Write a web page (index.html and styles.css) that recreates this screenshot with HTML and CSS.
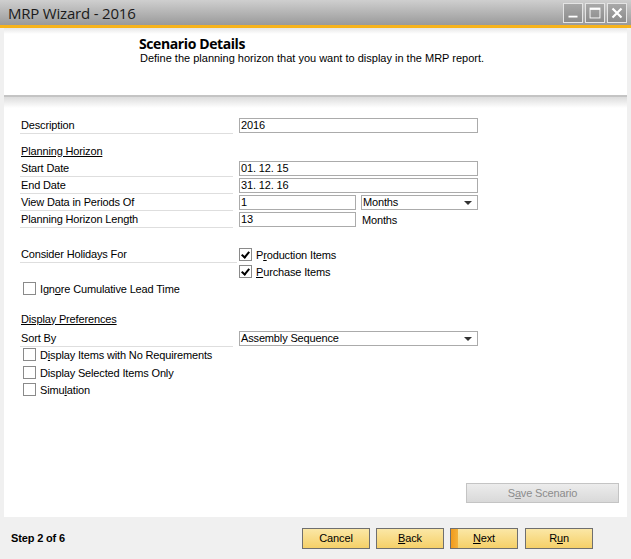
FILE: index.html
```html
<!DOCTYPE html>
<html>
<head>
<meta charset="utf-8">
<link rel="stylesheet" href="styles.css">
</head>
<body>
<div class="window">
  <div class="titlebar">
    <div class="title">MRP Wizard - 2016</div>
    <div class="controls">
      <div class="ctl"><svg width="20" height="20" viewBox="0 0 20 20"><rect x="5" y="13" width="10" height="2" fill="#fff"/></svg></div>
      <div class="ctl"><svg width="20" height="20" viewBox="0 0 20 20"><rect x="4.5" y="4.5" width="11" height="11" fill="none" stroke="#fff" stroke-width="1"/><rect x="4.5" y="4.5" width="11" height="2" fill="#fff"/></svg></div>
      <div class="ctl"><svg width="20" height="20" viewBox="0 0 20 20"><path d="M5 5 L15 15 M15 5 L5 15" stroke="#fff" stroke-width="2.4"/></svg></div>
    </div>
  </div>
  <div class="accent"></div>
  <div class="main">
    <div class="header">
      <div class="h-title">Scenario Details</div>
      <div class="h-sub">Define the planning horizon that you want to display in the MRP report.</div>
    </div>
    <div class="sep"></div>
    <div class="form">
      <div class="row first">
        <div class="label">Description</div>
        <div class="field wide">2016</div>
      </div>
      <div class="row gap1">
        <div class="section">Planning Horizon</div>
      </div>
      <div class="row step1">
        <div class="label">Start Date</div>
        <div class="field wide">01. 12. 15</div>
      </div>
      <div class="row">
        <div class="label">End Date</div>
        <div class="field wide">31. 12. 16</div>
      </div>
      <div class="row">
        <div class="label">View Data in Periods Of</div>
        <div class="field half">1</div>
        <div class="select half2">Months<span class="arrow"></span></div>
      </div>
      <div class="row">
        <div class="label">Planning Horizon Length</div>
        <div class="field half">13</div>
        <div class="plain">Months</div>
      </div>
      <div class="row gap2">
        <div class="label long">Consider Holidays For</div>
        <div class="check"><span class="box on"></span>P<u>r</u>oduction Items</div>
      </div>
      <div class="row">
        <div class="label nolines"></div>
        <div class="check"><span class="box on"></span><u>P</u>urchase Items</div>
      </div>
      <div class="row">
        <div class="check left"><span class="box"></span>Ign<u>o</u>re Cumulative Lead Time</div>
      </div>
      <div class="row gap3">
        <div class="section">Display Preferences</div>
      </div>
      <div class="row sortrow">
        <div class="label">Sort By</div>
        <div class="select wide">Assembly Sequence<span class="arrow"></span></div>
      </div>
      <div class="row tight">
        <div class="check left"><span class="box"></span>D<u>i</u>splay Items with No Requirements</div>
      </div>
      <div class="row step1">
        <div class="check left"><span class="box"></span>Display Selected Items Only</div>
      </div>
      <div class="row">
        <div class="check left"><span class="box"></span>Simu<u>l</u>ation</div>
      </div>
      <div class="spacer"></div>
      <div class="save-row">
        <div class="save">S<u>a</u>ve Scenario</div>
      </div>
    </div>
  </div>
  <div class="footer">
    <div class="step">Step 2 of 6</div>
    <div class="buttons">
      <div class="btn">Cancel</div>
      <div class="btn"><u>B</u>ack</div>
      <div class="btn next"><u>N</u>ext</div>
      <div class="btn run">R<u>u</u>n</div>
    </div>
  </div>
</div>
</body>
</html>
```
FILE: styles.css
```css
* { box-sizing: border-box; }
html, body { margin: 0; padding: 0; }
body {
  width: 631px;
  height: 559px;
  background: #f0f0f0;
  font-family: "Liberation Sans", Arial, sans-serif;
  font-size: 11px;
  letter-spacing: -0.15px;
  color: #000;
  overflow: hidden;
}
.window { display: flex; flex-direction: column; height: 559px; }
.titlebar {
  height: 25px;
  background: linear-gradient(#cfcfcf, #9a9a9a);
  display: flex;
  align-items: center;
  justify-content: space-between;
  padding: 0 4px 0 8px;
}
.title {
  font-family: "Open Sans", "Liberation Sans", sans-serif;
  font-size: 15px;
  color: #1a1a1a;
  letter-spacing: -0.2px;
}
.controls { display: flex; gap: 2px; margin-top: 1px; }
.ctl {
  width: 20px; height: 20px;
  border: 1px solid #e4e4e4;
  background: linear-gradient(#a8a8a8, #8c8c8c);
  display: flex; align-items: center; justify-content: center;
}
.ctl svg { display: block; }
.accent { height: 3px; background: #f7b31b; }
.main {
  flex: 1;
  margin: 0 4px;
  background: #fff;
  display: flex;
  flex-direction: column;
}
.header {
  height: 67px;
  padding: 7px 0 0 135px;
  background: linear-gradient(#e6e6e6 0, #ffffff 6px);
}
.h-title {
  font-family: "Open Sans", "Liberation Sans", sans-serif;
  font-weight: bold;
  font-size: 14px;
  letter-spacing: -0.4px;
  line-height: 17px;
}
.h-sub { font-size: 11px; line-height: 13px; margin-left: 1px; letter-spacing: 0; }
.sep {
  height: 13px;
  border-top: 2px solid #c4c4c4;
  background: linear-gradient(#dcdcdc, #ffffff);
}
.form {
  flex: 1;
  display: flex;
  flex-direction: column;
  padding-left: 16px;
}
.row {
  display: flex;
  align-items: center;
  height: 17px;
}
.row.first { margin-top: 9px; }
.row.gap1 { margin-top: 8px; }
.row.gap2 { margin-top: 18px; }
.row.gap3 { margin-top: 13px; }
.row.sortrow { margin-top: 3px; }
.row.step1 { margin-top: 1px; }
.row.tight { margin-top: -1px; }
.label {
  width: 213px;
  height: 17px;
  line-height: 16px;
  padding-left: 1px;
  border-bottom: 1px solid #dedede;
  margin-right: 6px;
}
.label.long { width: 217px; margin-right: 2px; }
.label.nolines { border-bottom: none; width: 217px; margin-right: 2px; }
.section {
  text-decoration: underline;
  padding-left: 1px;
}
.field, .select {
  height: 15px;
  border: 1px solid #ababab;
  line-height: 13px;
  padding-left: 1px;
  background: #fff;
}
.wide { width: 239px; }
.half { width: 117px; }
.select { position: relative; }
.select.half2 { width: 117px; margin-left: 5px; }
.arrow {
  position: absolute;
  right: 5px; top: 5px;
  width: 0; height: 0;
  border-left: 4px solid transparent;
  border-right: 4px solid transparent;
  border-top: 4px solid #333;
}
.plain { margin-left: 6px; }
.check { display: flex; align-items: center; }
.check.left { padding-left: 3px; }
.box {
  width: 13px; height: 13px;
  border: 1px solid #8a8a8a;
  background: #fff;
  margin-right: 4px;
  position: relative;
}
.box.on::after {
  content: "";
  position: absolute;
  left: 3px; top: 1px;
  width: 3px; height: 6px;
  border: solid #000;
  border-width: 0 2px 2px 0;
  transform: rotate(40deg);
}
.spacer { flex: 1; }
.save-row { display: flex; justify-content: flex-end; padding-right: 8px; margin-bottom: 14px; }
.save {
  width: 153px; height: 20px;
  border: 1px solid #c4c4c4;
  background: linear-gradient(#ececec, #d9d9d9);
  color: #8c8c8c;
  text-align: center;
  line-height: 18px;
}
.footer {
  height: 42px;
  display: flex;
  align-items: center;
  justify-content: space-between;
  padding: 0 38px 0 11px;
}
.step { font-weight: bold; font-size: 11px; }
.buttons { display: flex; gap: 6px; }
.btn {
  width: 68px; height: 21px;
  border: 1px solid #6f6f6f;
  background: linear-gradient(#fbe7a6, #f5d068);
  text-align: center;
  line-height: 19px;
  font-size: 11px;
}
.btn.next {
  background: linear-gradient(90deg, #f19a1c 0, #f4b13a 7px, transparent 7px), linear-gradient(#fbe7a6, #f5d068);
}
.btn.run { margin-left: 1px; }
```
